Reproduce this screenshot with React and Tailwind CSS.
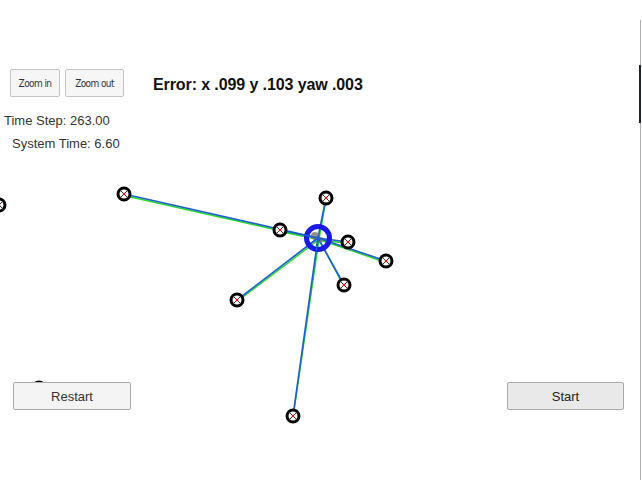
import React from "react";

const robot = { x: 318, y: 238 };

const landmarks = [
  { x: 124, y: 194, line: true },
  { x: 326, y: 198, line: true },
  { x: 280, y: 230, line: true },
  { x: 348, y: 242, line: true },
  { x: 386, y: 261, line: true },
  { x: 344, y: 285, line: true },
  { x: 237, y: 300, line: true },
  { x: 293, y: 416, line: true },
  { x: -1, y: 205, line: false },
  { x: 39, y: 388, line: false },
];

function Landmark({ x, y }) {
  return (
    <g>
      <circle cx={x} cy={y} r="6" fill="white" stroke="black" strokeWidth="3" />
      <line x1={x - 3.8} y1={y - 3.8} x2={x + 3.8} y2={y + 3.8} stroke="#333" strokeWidth="1" />
      <line x1={x + 3.8} y1={y - 3.8} x2={x - 3.8} y2={y + 3.8} stroke="#333" strokeWidth="1" />
      <circle cx={x} cy={y} r="1.3" fill="red" />
    </g>
  );
}

function Canvas() {
  return (
    <svg className="absolute inset-0" width="642" height="480" viewBox="0 0 642 480">
      {landmarks.filter(l => l.line).map((l, i) => (
        <g key={"g" + i}>
          <line x1={robot.x + 1} y1={robot.y + 1.5} x2={l.x} y2={l.y + 1.5} stroke="#22e022" strokeWidth="1.4" />
          <line x1={robot.x} y1={robot.y} x2={l.x} y2={l.y} stroke="#1f5fd0" strokeWidth="1.7" />
        </g>
      ))}
      {landmarks.map((l, i) => (
        <Landmark key={i} x={l.x} y={l.y} />
      ))}
      <circle cx={robot.x} cy={robot.y} r="11.5" fill="none" stroke="#1a1ae6" strokeWidth="5" />
      <circle cx={robot.x - 3} cy={robot.y - 2} r="4" fill="#777" opacity="0.8" />
      <circle cx={robot.x + 2} cy={robot.y + 2} r="3" fill="#777" opacity="0.7" />
      {landmarks.filter(l => l.line).map((l, i) => (
        <line key={"b" + i} x1={robot.x} y1={robot.y} x2={robot.x + (l.x - robot.x) * 0.07} y2={robot.y + (l.y - robot.y) * 0.07} stroke="#1f5fd0" strokeWidth="1.6" />
      ))}
    </svg>
  );
}

export default function App() {
  return (
    <div className="relative w-[642px] h-[480px] bg-white overflow-hidden font-['Liberation_Sans',Arial,sans-serif]">
      <Canvas />
      <div className="absolute right-[1px] top-[20px] bottom-0 w-[1px] bg-[#b0b0b0]"></div>
      <div className="absolute right-[1px] top-[65px] h-[58px] w-[2px] bg-[#1c2330]"></div>

      <div className="relative flex flex-col h-full">
        <div className="flex items-center pt-[69px] pl-[10px]">
          <button className="w-[50px] h-[28px] bg-[#f6f6f6] border border-[#c4c4c4] rounded-[2px] text-[10px] text-[#333] font-['DejaVu_Sans_Condensed',sans-serif] tracking-[-0.6px]">
            Zoom in
          </button>
          <button className="ml-[5px] w-[59px] h-[28px] bg-[#f6f6f6] border border-[#c4c4c4] rounded-[2px] text-[10px] text-[#333] font-['DejaVu_Sans_Condensed',sans-serif] tracking-[-0.6px]">
            Zoom out
          </button>
          <div className="ml-[29px] mt-[4px] text-[16px] font-bold text-[#111] tracking-[-0.1px]">Error: x .099 y .103 yaw .003</div>
        </div>
        <div className="mt-[16px] pl-[4px] text-[13px] leading-[16px] text-[#333]">Time Step: 263.00</div>
        <div className="mt-[7px] pl-[12px] text-[13px] leading-[16px] text-[#333]">System Time: 6.60</div>
        <div className="mt-auto mb-[70px] flex justify-between pl-[13px] pr-[18px]">
          <button className="w-[118px] h-[28px] bg-[#f4f4f4] border border-[#aaa] rounded-[2px] text-[13px] text-[#333] pt-[1px]">
            Restart
          </button>
          <button className="w-[117px] h-[28px] bg-[#e9e9e9] border border-[#aaa] rounded-[2px] text-[13px] text-[#222] pt-[1px]">
            Start
          </button>
        </div>
      </div>
    </div>
  );
}
